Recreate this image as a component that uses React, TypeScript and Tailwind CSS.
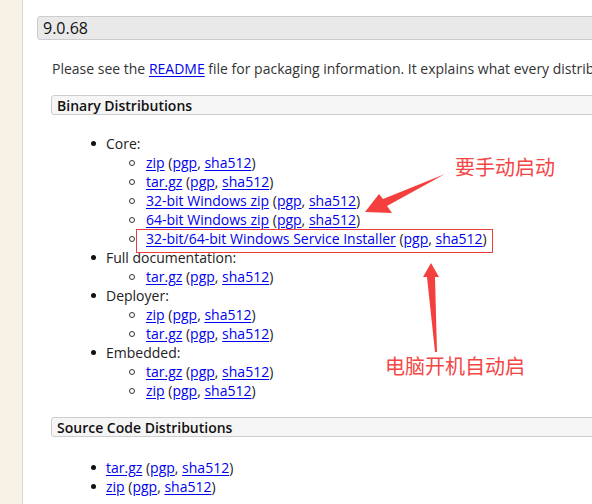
import React from "react";

type Dl = { name: string };

const link = "text-[#0000ee] underline underline-offset-[2px]";

function DlLink({ name }: Dl) {
  return (
    <>
      <a href="#" className={link}>{name}</a> (<a href="#" className={link}>pgp</a>, <a href="#" className={link}>sha512</a>)
    </>
  );
}

function Disc({ children }: { children: React.ReactNode }) {
  return (
    <div className="flex items-center h-[19px]">
      <span className="w-[5px] h-[5px] rounded-full bg-[#111] ml-[92px] mr-[10px]" />
      <span>{children}</span>
    </div>
  );
}

function Circle({ children }: { children: React.ReactNode }) {
  return (
    <div className="flex items-center h-[19px]">
      <span className="w-[6px] h-[6px] rounded-full border border-[#333] ml-[130px] mr-[11px]" />
      <span className="whitespace-nowrap">{children}</span>
    </div>
  );
}

const groups: { title: string; items: string[] }[] = [
  { title: "Core:", items: ["zip", "tar.gz", "32-bit Windows zip", "64-bit Windows zip", "32-bit/64-bit Windows Service Installer"] },
  { title: "Full documentation:", items: ["tar.gz"] },
  { title: "Deployer:", items: ["zip", "tar.gz"] },
  { title: "Embedded:", items: ["tar.gz", "zip"] },
];

export default function App() {
  return (
    <div className="relative w-[592px] h-[504px] overflow-hidden flex bg-white font-['Open_Sans',sans-serif] text-[14px] text-[#222]">
      <div className="w-[23px] shrink-0 bg-[#f8f2e6] border-r border-[#d8d4cc]" />

      <div className="flex-1 pt-[16px] pl-[14px]">
        <div className="w-[700px] h-[24px] flex items-center pl-[5px] bg-[#e9e9e9] border border-[#cdcdcd] rounded-[3px] text-[16px] text-[#111]">
          9.0.68
        </div>

        <div className="pl-[15px]">
          <p className="mt-[19px] h-[19px] leading-[19px] whitespace-nowrap text-[#333]">
            Please see the <a href="#" className={link}>README</a> file for packaging information. It explains what every distribution contains.
          </p>

          <div className="mt-[17px] w-[700px] h-[20px] flex items-center pl-[5px] -ml-px bg-[#f5f5f5] border border-[#cdcdcd] rounded-[3px] font-semibold text-[#111]">
            Binary Distributions
          </div>

          <div className="mt-[19px] -ml-[53px] leading-[19px]">
            {groups.map((g) => (
              <div key={g.title}>
                <Disc>{g.title}</Disc>
                {g.items.map((it, i) => (
                  <Circle key={i}>
                    <DlLink name={it} />
                  </Circle>
                ))}
              </div>
            ))}
          </div>

          <div className="mt-[17px] w-[700px] h-[20px] flex items-center pl-[5px] -ml-px bg-[#f5f5f5] border border-[#cdcdcd] rounded-[3px] font-semibold text-[#111]">
            Source Code Distributions
          </div>

          <div className="mt-[21px] -ml-[53px] leading-[19px]">
            <Disc><DlLink name="tar.gz" /></Disc>
            <Disc><DlLink name="zip" /></Disc>
          </div>
        </div>
      </div>

      {/* annotations */}
      <div className="absolute left-[136px] top-[229px] w-[357px] h-[24px] border border-[#ee3b3b] pointer-events-none" />
      <svg className="absolute inset-0 pointer-events-none" width="592" height="504" viewBox="0 0 592 504">
        <polygon points="365,212 379,194 383,199 445,174 387,206 392,213" fill="#f43f3f" />
        <polygon points="431,263 439,277 435,277 437,352 435,352 427,277 423,277" fill="#f43f3f" />
      </svg>
      <div className="absolute left-[455px] top-[153px] text-[20px] leading-[28px] text-[#f44545] font-['Noto_Sans_CJK_SC',sans-serif] whitespace-nowrap">
        要手动启动
      </div>
      <div className="absolute left-[385px] top-[352px] text-[20px] leading-[28px] text-[#f44545] font-['Noto_Sans_CJK_SC',sans-serif] whitespace-nowrap">
        电脑开机自动启
      </div>
    </div>
  );
}
